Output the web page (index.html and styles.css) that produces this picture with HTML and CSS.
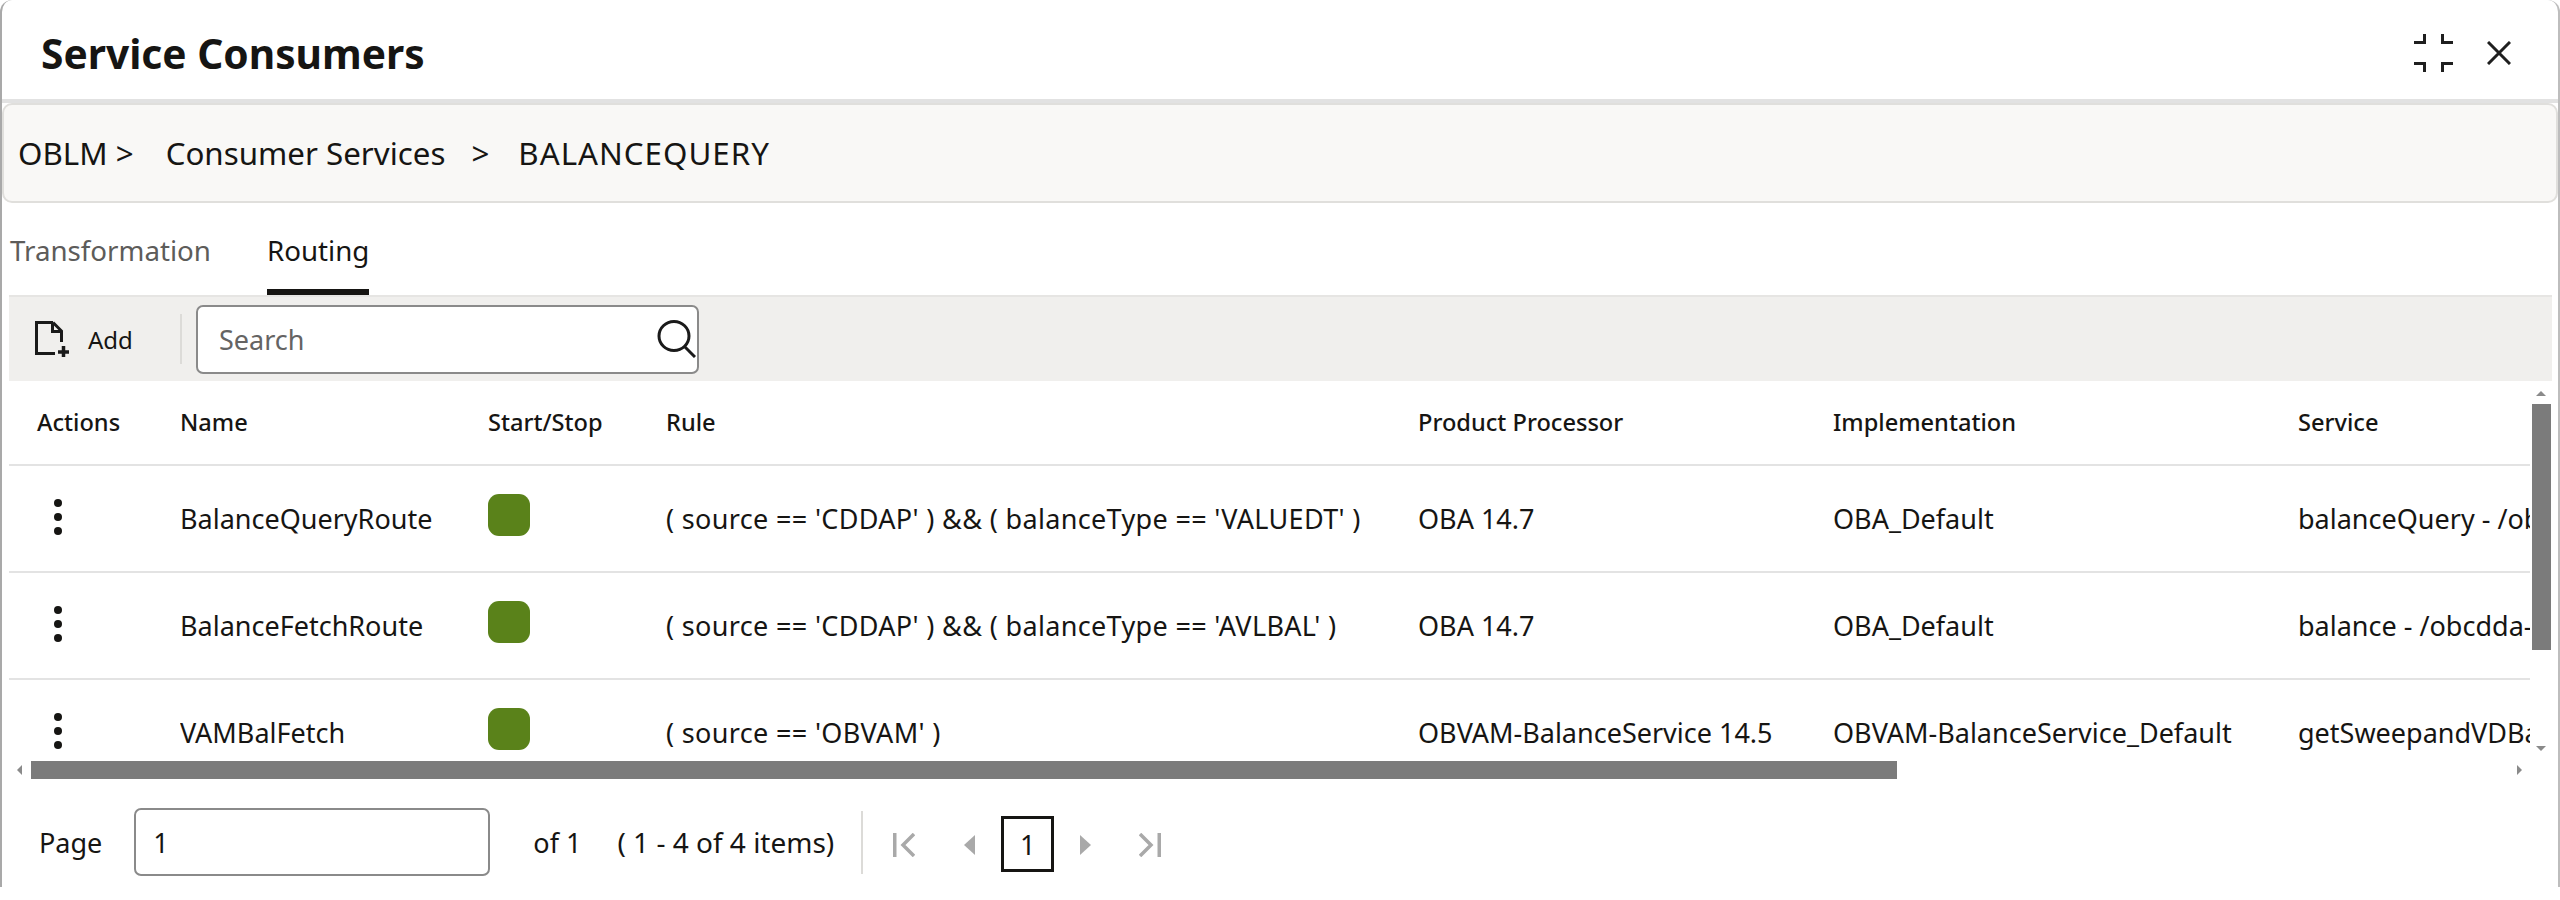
FILE: index.html
```html
<!DOCTYPE html>
<html lang="en">
<head>
<meta charset="utf-8">
<title>Service Consumers</title>
<link rel="stylesheet" href="styles.css">
</head>
<body>
<div class="window">
  <header class="head">
    <h1 class="title">Service Consumers</h1>
    <div class="head-actions">
      <svg class="ic-compress" viewBox="0 0 40 38" fill="none" stroke="#1f1f1f" stroke-width="3"><path d="M0 8.5H10.500V0M39 8.500H28.500V0M0 29.500H10.500V38M39 29.500H28.500V38"/></svg>
      <svg class="ic-close" viewBox="0 0 24 24" fill="none" stroke="#1f1f1f" stroke-width="3"><path d="M1 1L23 23M23 1L1 23"/></svg>
    </div>
  </header>
  <nav class="crumbs">
    <span>OBLM &gt;</span><span class="c2">Consumer Services</span><span class="c3">&gt;</span><span class="c4">BALANCEQUERY</span>
  </nav>
  <div class="tabs">
    <div class="tab">Transformation</div>
    <div class="tab active">Routing</div>
  </div>
  <div class="toolbar">
    <button class="add">
      <svg class="ic-add" viewBox="0 0 34 36" fill="none" stroke="#1a1a1a" stroke-width="3"><path d="M18 1.500H1.500V32.500H20M18 1.500L26.500 10V21M17.500 2V10.500H26"/><path d="M28.500 25V36M23 31H34" stroke-width="3.500"/></svg>
      <span>Add</span>
    </button>
    <div class="tool-sep"></div>
    <div class="search">
      <span class="search-ph">Search</span>
      <svg class="ic-search" viewBox="0 0 39 38" fill="none" stroke="#1a1a1a" stroke-width="3"><ellipse cx="17" cy="16" rx="15" ry="14.500"/><path d="M28 27L38 37"/></svg>
    </div>
  </div>
  <div class="table-wrap">
    <div class="viewport">
      <div class="row thead">
        <div class="c-first">Actions</div><div>Name</div><div>Start/Stop</div><div>Rule</div><div>Product Processor</div><div>Implementation</div><div>Service</div>
      </div>
      <div class="row">
        <div class="c-first"><span class="kebab"><i></i><i></i><i></i></span></div><div>BalanceQueryRoute</div><div><span class="toggle"></span></div><div class="rule">( source == 'CDDAP' ) &amp;&amp; ( balanceType == 'VALUEDT' )</div><div>OBA 14.7</div><div>OBA_Default</div><div>balanceQuery - /obcdda-balance</div>
      </div>
      <div class="row">
        <div class="c-first"><span class="kebab"><i></i><i></i><i></i></span></div><div>BalanceFetchRoute</div><div><span class="toggle"></span></div><div class="rule">( source == 'CDDAP' ) &amp;&amp; ( balanceType == 'AVLBAL' )</div><div>OBA 14.7</div><div>OBA_Default</div><div>balance - /obcdda-balance</div>
      </div>
      <div class="row">
        <div class="c-first"><span class="kebab"><i></i><i></i><i></i></span></div><div>VAMBalFetch</div><div><span class="toggle"></span></div><div class="rule">( source == 'OBVAM' )</div><div>OBVAM-BalanceService 14.5</div><div>OBVAM-BalanceService_Default</div><div>getSweepandVDBalance</div>
      </div>
    </div>
    <div class="vbar">
      <span class="arr-up"></span>
      <span class="vthumb"></span>
      <span class="arr-down"></span>
    </div>
    <div class="hbar">
      <span class="arr-left"></span>
      <span class="hthumb"></span>
      <span class="arr-right"></span>
    </div>
  </div>
  <footer class="pager">
    <span class="lbl">Page</span>
    <div class="page-input">1</div>
    <span class="of">of 1</span>
    <span class="items">( 1 - 4 of 4 items)</span>
    <div class="page-sep"></div>
    <svg class="ic-first" viewBox="0 0 22 24" fill="none" stroke="#a9a9a9" stroke-width="3.500"><path d="M1.750 0V24M21 1L10 12L21 23"/></svg>
    <svg class="ic-prev" viewBox="0 0 11 20" fill="#a9a9a9"><path d="M11 0V20L0 10Z"/></svg>
    <span class="page-cur">1</span>
    <svg class="ic-next" viewBox="0 0 11 20" fill="#a9a9a9"><path d="M0 0V20L11 10Z"/></svg>
    <svg class="ic-last" viewBox="0 0 22 24" fill="none" stroke="#a9a9a9" stroke-width="3.500"><path d="M20.250 0V24M1 1L12 12L1 23"/></svg>
  </footer>
</div>
</body>
</html>
```
FILE: styles.css
```css
* { box-sizing: border-box; }
html, body { margin: 0; padding: 0; background: #fff; }
body { font-family: "Noto Sans", "Open Sans", sans-serif; color: #161513; }
.window {
  width: 2560px; height: 887px;
  display: flex; flex-direction: column;
  border-left: 2px solid #a9a9a9; border-right: 2px solid #bdbdbd;
  border-radius: 12px 12px 0 0;
  overflow: hidden;
}
.head {
  height: 103px; flex: none;
  display: flex; align-items: center; justify-content: space-between;
  padding: 7px 47px 0 39px;
  border-bottom: 4px solid #e2e2e2;
}
.title { margin: 0; font-size: 40.7px; font-weight: 700; line-height: 1; }
.head-actions { display: flex; align-items: center; gap: 33px; }
.ic-compress { width: 40px; height: 38px; display: block; }
.ic-close { width: 24px; height: 24px; display: block; }
.crumbs {
  height: 100px; flex: none;
  display: flex; align-items: center;
  padding-left: 14px;
  background: #f9f8f6;
  border: 2px solid #e0dfdc; border-radius: 10px;
  font-size: 31.3px;
}
.c2 { margin-left: 32px; }
.c3 { margin-left: 26px; }
.c4 { margin-left: 29px; letter-spacing: 1px; }
.tabs { height: 92px; flex: none; display: flex; padding-left: 8px; gap: 56px; }
.tab { height: 92px; padding-top: 27px; font-size: 27.7px; line-height: 40px; color: #5d5c5a; }
.tab.active { color: #161513; border-bottom: 6px solid #161513; }
.toolbar {
  height: 86px; flex: none; width: 2543px; margin-left: 7px;
  display: flex; align-items: center;
  background: #f0efed; border-top: 2px solid #e6e5e3;
}
.add {
  display: flex; align-items: center; gap: 19px;
  padding: 0 0 0 26px; width: 171px;
  background: none; border: 0; font: inherit; font-size: 24px; color: #161513;
}
.ic-add { width: 34px; height: 36px; display: block; }
.tool-sep { width: 2px; height: 50px; background: #dcdbd8; }
.search {
  width: 503px; height: 69px; margin-left: 14px;
  display: flex; align-items: center; justify-content: space-between;
  background: #fff; border: 2px solid #8a8a8a; border-radius: 7px;
  padding: 0 1px 0 21px;
}
.search-ph { font-size: 27px; color: #656463; }
.ic-search { width: 39px; height: 38px; display: block; }
.table-wrap {
  width: 2543px; height: 398px; flex: none; margin-left: 7px;
  display: grid; grid-template-columns: 2521px 22px; grid-template-rows: 380px 18px;
}
.viewport { overflow: hidden; }
.row {
  height: 107px;
  display: grid; grid-template-columns: 171px 308px 178px 752px 415px 465px 232px;
  align-items: center;
  border-bottom: 2px solid #e3e3e3;
  font-size: 27px; white-space: nowrap;
}
.row > div { overflow: hidden; }
.row > .rule { letter-spacing: 0.34px; }
.row.thead { height: 85px; font-size: 23.6px; font-weight: 500; padding-bottom: 1px; }
.c-first { padding-left: 28px; }
.kebab { display: flex; flex-direction: column; gap: 6px; margin-left: 17px; width: 8px; margin-bottom: 3px; }
.kebab i { display: block; width: 8px; height: 8px; border-radius: 50%; background: #161513; }
.toggle { display: block; width: 42px; height: 42px; margin-bottom: 8px; border-radius: 11px; background: #5a821a; }
.vbar { display: flex; flex-direction: column; align-items: center; padding-top: 10px; }
.vthumb { width: 19px; height: 246px; margin-top: 8px; background: #7b7b7b; }
.arr-up { width: 0; height: 0; border: 5px solid transparent; border-top: 0; border-bottom: 5px solid #8a8a8a; }
.arr-down { width: 0; height: 0; margin-top: 96px; border: 5px solid transparent; border-bottom: 0; border-top: 5px solid #8a8a8a; }
.hbar { grid-column: 1 / 3; display: flex; align-items: center; }
.arr-left { width: 0; height: 0; margin-left: 8px; border: 5px solid transparent; border-left: 0; border-right: 5px solid #8a8a8a; }
.hthumb { width: 1866px; height: 18px; margin-left: 9px; background: #7b7b7b; }
.arr-right { width: 0; height: 0; margin-left: 620px; border: 5px solid transparent; border-right: 0; border-left: 5px solid #8a8a8a; }
.pager {
  flex: 1; display: flex; align-items: center;
  padding: 18px 0 0 37px; font-size: 27px;
}
.page-input {
  width: 356px; height: 68px; margin-left: 32px;
  display: flex; align-items: center; padding-left: 17px;
  border: 2px solid #8a8a8a; border-radius: 7px;
}
.of { margin-left: 43px; }
.items { margin-left: 36px; font-size: 28px; }
.page-sep { width: 2px; height: 63px; margin-left: 27px; background: #dcdbd8; }
.ic-first { width: 22px; height: 24px; margin: 6px 0 0 30px; }
.ic-prev { width: 11px; height: 20px; margin: 6px 0 0 49px; }
.page-cur {
  width: 53px; height: 56px; margin: 4px 0 0 26px;
  display: flex; align-items: center; justify-content: center;
  border: 3px solid #161513;
}
.ic-next { width: 11px; height: 20px; margin: 6px 0 0 26px; }
.ic-last { width: 22px; height: 24px; margin: 6px 0 0 48px; }
```
